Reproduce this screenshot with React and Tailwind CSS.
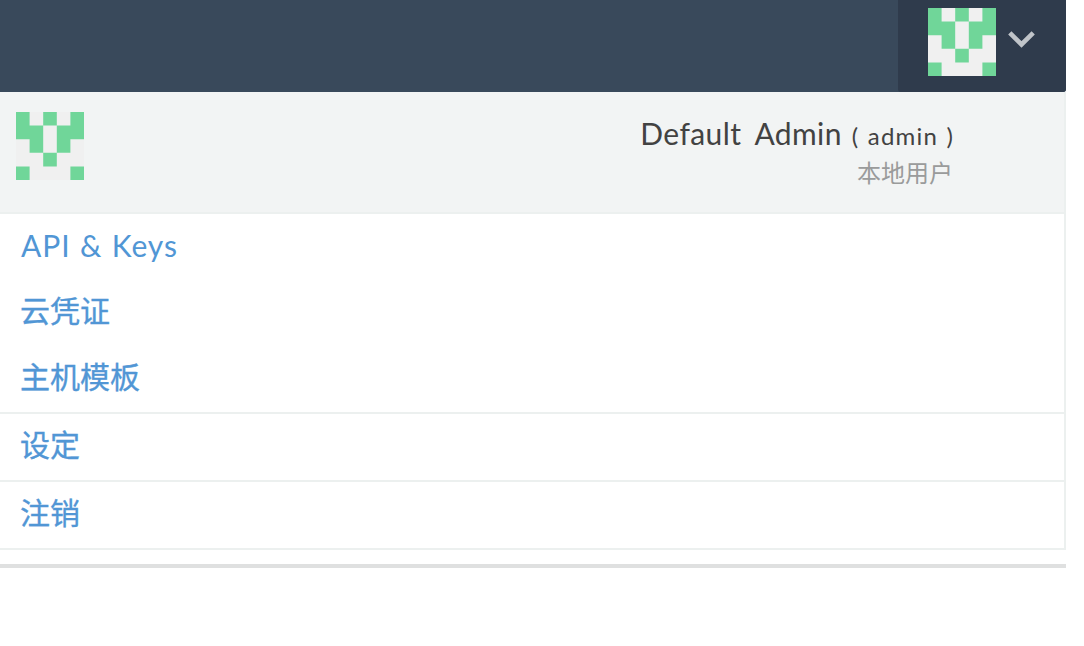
const PATTERN = ['10101', '11011', '01010', '00100', '10001'];

const CELLS = PATTERN.flatMap((row, y) =>
  [...row].map((cell, x) => (cell === '1' ? `M${x} ${y}h1v1h-1z` : ''))
).join('');

function Identicon() {
  return (
    <svg width="68" height="68" viewBox="0 0 5 5" className="block shrink-0" aria-hidden="true">
      <rect width="5" height="5" fill="#f0f0f0" />
      <path d={CELLS} fill="#70d699" />
    </svg>
  );
}

function MenuItem({ children, className = 'pb-[6px] pl-5 [-webkit-text-stroke:0.35px_#5196d5]' }) {
  return (
    <a href="#" className={`flex h-[66px] items-center text-[30px] leading-[44px] text-[#5196d5] ${className}`}>
      {children}
    </a>
  );
}

export default function App() {
  return (
    <div className="min-h-[646px] bg-white font-['Lato','Noto_Sans_CJK_SC',sans-serif]">
      <div className="w-[1066px]">
        <header className="flex h-[92px] justify-end rounded-br-[3px] bg-[#39495b]">
          <button type="button" className="flex w-[168px] items-start rounded-b-[3px] bg-[#2f3b4c] pt-2 pl-[30px]">
            <Identicon />
            <svg width="28" height="18" viewBox="0 0 28 18" className="mt-[22px] ml-3 shrink-0" fill="none" aria-hidden="true">
              <path d="M1.8 2.8L13.5 14.5L25.2 2.8" stroke="#c0c4c9" strokeWidth="4.6" />
            </svg>
          </button>
        </header>
        <nav className="border-r-2 border-[#ecf0ef]">
          <div className="flex h-[122px] justify-between border-b-2 border-[#ecf0ef] bg-[#f2f4f4] pt-[18px] pr-[110px] pl-4">
            <div className="pt-0.5">
              <Identicon />
            </div>
            <div className="text-right text-[#424242]">
              <div className="h-[44px] whitespace-nowrap pt-px leading-[44px]">
                <span className="text-[30px] tracking-[0.4px] [word-spacing:6px]">Default Admin</span>
                <span className="ml-[10px] text-[24px] tracking-[1.2px] [word-spacing:1px]">( admin )</span>
              </div>
              <div className="pt-[2px] pr-px text-[24px] leading-[34px] text-[#9a9b9b]">本地用户</div>
            </div>
          </div>
          <div className="border-b-2 border-[#ecf0ef]">
            <MenuItem className="pb-[5px] pl-[21px] tracking-[0.9px] [word-spacing:1px]">API &amp; Keys</MenuItem>
            <MenuItem>云凭证</MenuItem>
            <MenuItem>主机模板</MenuItem>
          </div>
          <div className="border-b-2 border-[#ecf0ef]">
            <MenuItem>设定</MenuItem>
          </div>
          <div className="border-b-2 border-[#ecf0ef]">
            <MenuItem>注销</MenuItem>
          </div>
        </nav>
        <div className="mt-[14px] h-1 bg-[#dfe0e0]" />
      </div>
    </div>
  );
}
